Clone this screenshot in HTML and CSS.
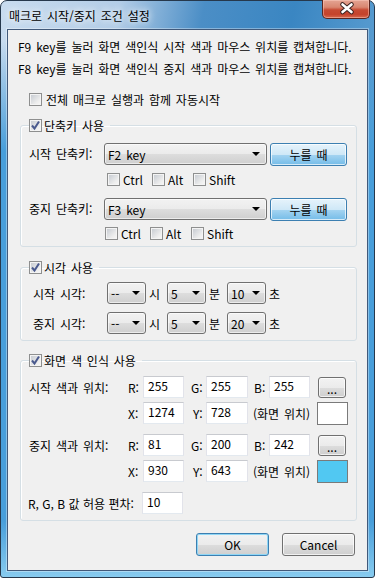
FILE: index.html
```html
<!DOCTYPE html>
<html lang="ko">
<head>
    <meta charset="UTF-8">
    <meta name="viewport" content="width=device-width, initial-scale=1.0">
    <title>매크로 시작/중지 조건 설정</title>
    <link rel="stylesheet" href="styles.css">
</head>
<body>

    <div class="window">
        <div class="titlebar">
            <span class="title">매크로 시작/중지 조건 설정</span>
            <div class="close">
                <svg width="48" height="19" viewBox="0 0 48 19">
                    <path d="M19.5 5.5 L28.5 13 M28.5 5.5 L19.5 13" stroke="#3a2220" stroke-width="4.6" stroke-linecap="round"/>
                    <path d="M19.5 5.5 L28.5 13 M28.5 5.5 L19.5 13" stroke="#ffffff" stroke-width="2.6" stroke-linecap="round"/>
                </svg>
            </div>
        </div>

        <div class="client">
            <p class="intro">F9 key를 눌러 화면 색인식 시작 색과 마우스 위치를 캡쳐합니다.</p>
            <p class="intro">F8 key를 눌러 화면 색인식 중지 색과 마우스 위치를 캡쳐합니다.</p>

            <div class="check auto"><span class="box"></span>전체 매크로 실행과 함께 자동시작</div>

            <!-- 단축키 -->
            <fieldset class="group hotkey">
                <legend><span class="box checked"><svg width="11" height="11" viewBox="0 0 11 11"><path d="M2 5.5 L4.5 8.5 L9 1.5" fill="none" stroke="#4a5a8e" stroke-width="2"/></svg></span>단축키 사용</legend>
                <div class="row">
                    <span class="lbl">시작 단축키:</span>
                    <div class="combo wide">F2 key<span class="arrow"></span></div>
                    <button class="btn blue press">누를 때</button>
                </div>
                <div class="mods first">
                    <span class="mod ctrl"><span class="box"></span>Ctrl</span>
                    <span class="mod alt"><span class="box"></span>Alt</span>
                    <span class="mod"><span class="box"></span>Shift</span>
                </div>
                <div class="row second">
                    <span class="lbl">중지 단축키:</span>
                    <div class="combo wide">F3 key<span class="arrow"></span></div>
                    <button class="btn blue press">누를 때</button>
                </div>
                <div class="mods last">
                    <span class="mod ctrl"><span class="box"></span>Ctrl</span>
                    <span class="mod alt"><span class="box"></span>Alt</span>
                    <span class="mod"><span class="box"></span>Shift</span>
                </div>
            </fieldset>

            <!-- 시각 -->
            <fieldset class="group time">
                <legend><span class="box checked"><svg width="11" height="11" viewBox="0 0 11 11"><path d="M2 5.5 L4.5 8.5 L9 1.5" fill="none" stroke="#4a5a8e" stroke-width="2"/></svg></span>시각 사용</legend>
                <div class="trow">
                    <span class="tlbl">시작 시각:</span>
                    <div class="combo small">--<span class="arrow"></span></div><span class="unit">시</span>
                    <div class="combo small">5<span class="arrow"></span></div><span class="unit">분</span>
                    <div class="combo small">10<span class="arrow"></span></div><span class="unit">초</span>
                </div>
                <div class="trow next">
                    <span class="tlbl">중지 시각:</span>
                    <div class="combo small">--<span class="arrow"></span></div><span class="unit">시</span>
                    <div class="combo small">5<span class="arrow"></span></div><span class="unit">분</span>
                    <div class="combo small">20<span class="arrow"></span></div><span class="unit">초</span>
                </div>
            </fieldset>

            <!-- 화면 색 인식 -->
            <fieldset class="group color">
                <legend><span class="box checked"><svg width="11" height="11" viewBox="0 0 11 11"><path d="M2 5.5 L4.5 8.5 L9 1.5" fill="none" stroke="#4a5a8e" stroke-width="2"/></svg></span>화면 색 인식 사용</legend>
                <div class="crow">
                    <span class="clbl">시작 색과 위치:</span>
                    <span class="k">R:</span><div class="tb">255</div>
                    <span class="k g">G:</span><div class="tb w42">255</div>
                    <span class="k b">B:</span><div class="tb">255</div>
                    <button class="btn dots">...</button>
                </div>
                <div class="crow near">
                    <span class="clbl"></span>
                    <span class="k">X:</span><div class="tb">1274</div>
                    <span class="k y">Y:</span><div class="tb w42">728</div>
                    <span class="pos">(화면 위치)</span>
                    <div class="swatch"></div>
                </div>
                <div class="crow far">
                    <span class="clbl">중지 색과 위치:</span>
                    <span class="k">R:</span><div class="tb">81</div>
                    <span class="k g">G:</span><div class="tb w42">200</div>
                    <span class="k b">B:</span><div class="tb">242</div>
                    <button class="btn dots">...</button>
                </div>
                <div class="crow near">
                    <span class="clbl"></span>
                    <span class="k">X:</span><div class="tb">930</div>
                    <span class="k y">Y:</span><div class="tb w42">643</div>
                    <span class="pos">(화면 위치)</span>
                    <div class="swatch" style="background: rgb(81, 200, 242);"></div>
                </div>
                <div class="crow far">
                    <span class="tol">R, G, B 값 허용 편차:</span><div class="tb">10</div>
                </div>
            </fieldset>

            <div class="actions">
                <button class="btn default">OK</button>
                <button class="btn">Cancel</button>
            </div>
        </div>
    </div>

</body>
</html>
```

FILE: styles.css
```css
body {
    margin: 0;
    background: #ffffff;
    font-family: "Noto Sans CJK KR", "Noto Sans", sans-serif;
    font-size: 12px;
    word-spacing: 1.5px;
    color: #000;
}
.window {
    width: 375px;
    height: 578px;
    box-sizing: border-box;
    border: 1px solid #26384c;
    border-radius: 7px 7px 3px 3px;
    padding: 0 6px 6px;
    display: flex;
    flex-direction: column;
    background:
        linear-gradient(to bottom, rgba(72, 158, 218, 0) 0, rgba(72, 158, 218, 0) 40px, rgba(72, 158, 218, 1) 150px, rgba(72, 158, 218, 1) 520px, rgba(138, 205, 240, 1) 578px),
        linear-gradient(100deg, #c9dcef 0%, #b3cde7 25%, #4b8ec6 43%, #3a86c2 62%, #5a9dd1 82%, #a3c8e6 100%);
}
.titlebar {
    height: 28px;
    flex: none;
    display: flex;
    align-items: flex-start;
    justify-content: space-between;
}
.title {
    margin: 7px 0 0 2px;
    line-height: 16px;
    text-shadow: 0 0 6px #fff, 0 0 10px rgba(255, 255, 255, 0.8);
}
.close {
    width: 48px;
    height: 19px;
    margin: -1px -2px 0 0;
    box-sizing: border-box;
    border: 1px solid #5a2621;
    border-top: none;
    border-radius: 0 0 5px 5px;
    background: linear-gradient(#e4a493 0%, #d98771 40%, #c74a33 55%, #c5432c 80%, #d7694f 100%);
    box-shadow: inset 0 0 0 1px rgba(255, 210, 200, 0.45);
}
.close svg {
    display: block;
    margin-top: -1px;
}
.client {
    flex: 1;
    border: 1px solid #41597a;
    box-shadow: 0 0 0 1px rgba(255, 255, 255, 0.35);
    background: #f0f0f0;
    padding: 6px 10px 0;
    display: flex;
    flex-direction: column;
}
.intro {
    margin: 0;
    line-height: 22px;
}

/* 체크박스 */
.box {
    width: 13px;
    height: 13px;
    box-sizing: border-box;
    border: 1px solid #8e8f8f;
    background: linear-gradient(135deg, #c3c8cf 0%, #eeeeee 70%, #f8f8f8 100%);
    box-shadow: inset 0 0 0 1px #f4f4f4;
    flex: none;
    display: inline-flex;
    align-items: center;
    justify-content: center;
}
.box.checked svg {
    display: block;
}
.check {
    display: flex;
    align-items: center;
    gap: 4px;
}
.auto {
    height: 22px;
    margin: 8px 0 0 11px;
}

/* 그룹박스 */
.group {
    margin: 9px 0 0 2px;
    border: 1px solid #d5dfe5;
    border-radius: 3px;
    padding: 0 8px;
    min-width: 0;
    box-shadow: inset 1px 1px 0 #fff;
}
.group legend {
    display: flex;
    align-items: center;
    gap: 2px;
    height: 13px;
    line-height: 13px;
    padding: 0 6px 0 0;
}
.hotkey {
    padding-top: 11px;
    padding-bottom: 6px;
}
.time {
    margin-top: 14px;
    padding-top: 8px;
    padding-bottom: 6px;
}
.color {
    margin-top: 13px;
    padding-top: 9px;
    padding-bottom: 6px;
}

.row {
    display: flex;
    align-items: flex-start;
    height: 23px;
}
.row .lbl {
    width: 75px;
    flex: none;
    line-height: 22px;
}
.row.second {
    margin-top: 12px;
}

/* 콤보박스 */
.combo {
    height: 22px;
    box-sizing: border-box;
    border: 1px solid #707070;
    border-radius: 3px;
    background: linear-gradient(#f2f2f2 0%, #ebebeb 50%, #dddddd 51%, #cfcfcf 100%);
    box-shadow: inset 0 0 0 1px rgba(255, 255, 255, 0.6);
    display: flex;
    align-items: center;
    padding-left: 3px;
    flex: none;
}
.combo.wide {
    width: 163px;
}
.combo.small {
    width: 39px;
}
.arrow {
    margin-left: auto;
    margin-right: 6px;
    width: 0;
    height: 0;
    border-left: 4px solid transparent;
    border-right: 4px solid transparent;
    border-top: 4px solid #000;
}
.combo.small .arrow {
    margin-right: 5px;
}

/* 버튼 */
.btn {
    height: 23px;
    box-sizing: border-box;
    border: 1px solid #707070;
    border-radius: 3px;
    background: linear-gradient(#f2f2f2 0%, #ebebeb 50%, #dddddd 51%, #cfcfcf 100%);
    box-shadow: inset 0 0 0 1px rgba(255, 255, 255, 0.7);
    font: inherit;
    word-spacing: inherit;
    color: #000;
    padding: 0;
    flex: none;
}
.btn.blue {
    border-color: #3c7fb1;
    background: linear-gradient(#e6f3fb 0%, #cfe8f7 50%, #a5d4f1 51%, #74bce8 100%);
}
.press {
    width: 77px;
    margin-left: 3px;
}
.btn.dots {
    width: 28px;
    height: 21px;
    margin-left: 8px;
    line-height: 14px;
    padding-top: 3px;
}
.btn.default {
    border-color: #3c7fb1;
    box-shadow: inset 0 0 0 1px #8fd6f5;
}

/* 조합키 */
.mods {
    display: flex;
    height: 13px;
    line-height: 13px;
}
.mods.first {
    margin: 7px 0 0 78px;
}
.mods.last {
    margin: 6px 0 0 76px;
}
.mod {
    display: flex;
    align-items: center;
    gap: 3px;
}
.mod.ctrl {
    width: 45px;
}
.mod.alt {
    width: 41px;
}

/* 시각 */
.trow {
    display: flex;
    align-items: center;
    height: 22px;
    margin-left: 4px;
}
.trow.next {
    margin-top: 8px;
}
.tlbl {
    width: 74px;
    flex: none;
}
.unit {
    width: 21px;
    padding-left: 3px;
    box-sizing: border-box;
    flex: none;
}

/* 색 인식 */
.crow {
    display: flex;
    align-items: center;
    height: 22px;
}
.crow.near {
    margin-top: 4px;
}
.crow.far {
    margin-top: 10px;
}
.clbl {
    width: 99px;
    flex: none;
}
.tol {
    width: 114px;
    flex: none;
    margin-left: -1px;
    word-spacing: 0;
}
.k {
    width: 15px;
    flex: none;
    box-sizing: border-box;
}
.k.g {
    width: 22px;
    padding-left: 7px;
}
.k.y {
    width: 22px;
    padding-left: 9px;
}
.k.b {
    width: 21px;
    padding-left: 6px;
}
.tb {
    width: 41px;
    height: 22px;
    box-sizing: border-box;
    border: 1px solid;
    border-color: #c8cacf #e2e3ea #e3e9ef #e2e3ea;
    background: #fff;
    padding: 1px 0 0 4px;
    line-height: 16px;
    flex: none;
}
.tb.w42 {
    width: 42px;
}
.pos {
    width: 69px;
    padding-left: 5px;
    box-sizing: border-box;
    flex: none;
}
.swatch {
    width: 31px;
    height: 23px;
    box-sizing: border-box;
    border: 1px solid #7a7a7a;
    background: #fff;
    flex: none;
}

.actions {
    display: flex;
    justify-content: flex-end;
    gap: 13px;
    margin: 12px 2px 0 0;
}
.actions .btn {
    width: 73px;
}
```
